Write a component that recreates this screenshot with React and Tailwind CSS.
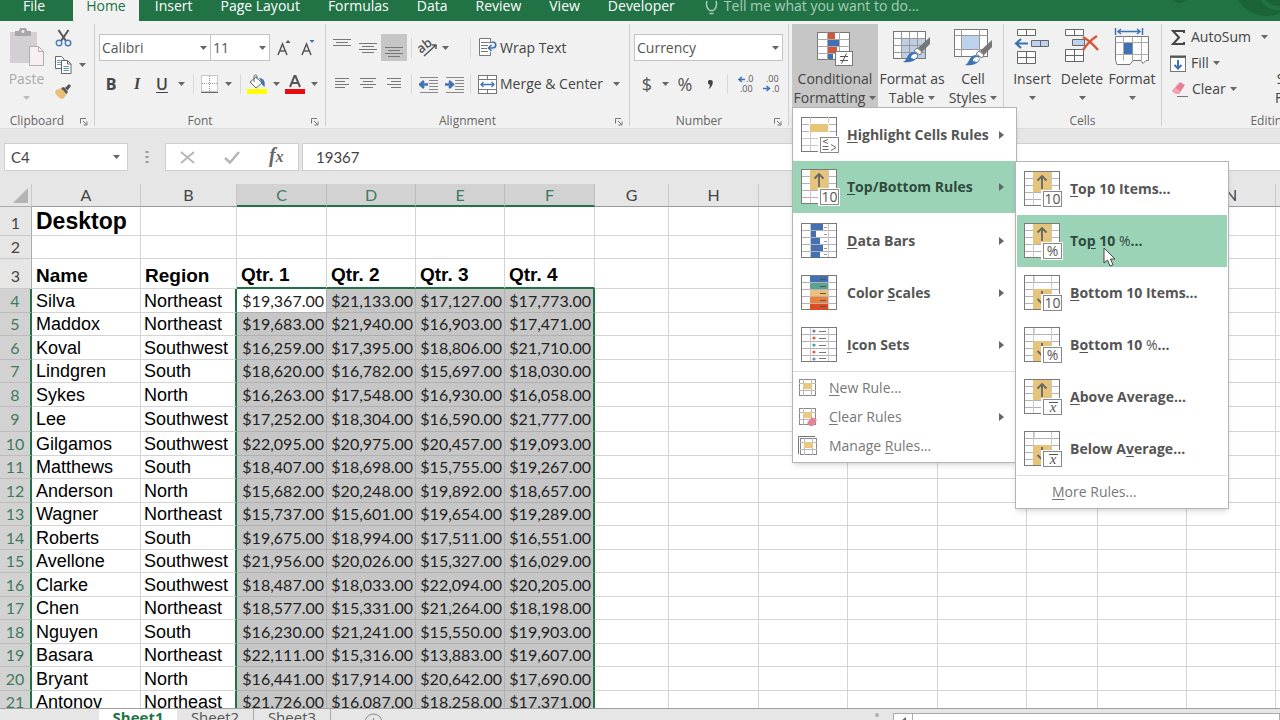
const tabs = ['Insert', 'Page Layout', 'Formulas', 'Data', 'Review', 'View', 'Developer'];

const columns = [
  { name: 'A', width: 109 },
  { name: 'B', width: 96 },
  { name: 'C', width: 90 },
  { name: 'D', width: 89 },
  { name: 'E', width: 89 },
  { name: 'F', width: 90 },
  { name: 'G', width: 74 },
  { name: 'H', width: 90 },
  { name: 'I', width: 89 },
  { name: 'J', width: 90 },
  { name: 'K', width: 89 },
  { name: 'L', width: 71 },
  { name: 'M', width: 89 },
  { name: 'N', width: 89 },
  { name: 'O', width: 89 },
];
const selectedColumns = ['C', 'D', 'E', 'F'];
const emptyColumns = ['G', 'H', 'I', 'J', 'K', 'L', 'M', 'N', 'O'];

const people = [
  ['Silva', 'Northeast', '$19,367.00', '$21,133.00', '$17,127.00', '$17,773.00'],
  ['Maddox', 'Northeast', '$19,683.00', '$21,940.00', '$16,903.00', '$17,471.00'],
  ['Koval', 'Southwest', '$16,259.00', '$17,395.00', '$18,806.00', '$21,710.00'],
  ['Lindgren', 'South', '$18,620.00', '$16,782.00', '$15,697.00', '$18,030.00'],
  ['Sykes', 'North', '$16,263.00', '$17,548.00', '$16,930.00', '$16,058.00'],
  ['Lee', 'Southwest', '$17,252.00', '$18,304.00', '$16,590.00', '$21,777.00'],
  ['Gilgamos', 'Southwest', '$22,095.00', '$20,975.00', '$20,457.00', '$19,093.00'],
  ['Matthews', 'South', '$18,407.00', '$18,698.00', '$15,755.00', '$19,267.00'],
  ['Anderson', 'North', '$15,682.00', '$20,248.00', '$19,892.00', '$18,657.00'],
  ['Wagner', 'Northeast', '$15,737.00', '$15,601.00', '$19,654.00', '$19,289.00'],
  ['Roberts', 'South', '$19,675.00', '$18,994.00', '$17,511.00', '$16,551.00'],
  ['Avellone', 'Southwest', '$21,956.00', '$20,026.00', '$15,327.00', '$16,029.00'],
  ['Clarke', 'Southwest', '$18,487.00', '$18,033.00', '$22,094.00', '$20,205.00'],
  ['Chen', 'Northeast', '$18,577.00', '$15,331.00', '$21,264.00', '$18,198.00'],
  ['Nguyen', 'South', '$16,230.00', '$21,241.00', '$15,550.00', '$19,903.00'],
  ['Basara', 'Northeast', '$22,111.00', '$15,316.00', '$13,883.00', '$19,607.00'],
  ['Bryant', 'North', '$16,441.00', '$17,914.00', '$20,642.00', '$17,690.00'],
  ['Antonov', 'Northeast', '$21,726.00', '$16,087.00', '$18,258.00', '$17,371.00'],
];

/* ---------- small shared pieces ---------- */

const Caret = ({ className = 'text-[#666]' }) => (
  <svg width="7" height="4" viewBox="0 0 7 4" className={`shrink-0 ${className}`}>
    <path d="M0 0h7L3.500 4z" fill="currentColor" />
  </svg>
);

const CaretButton = ({ label, className = 'w-[14px]' }) => (
  <button type="button" aria-label={label} className={`flex h-full items-center justify-center ${className}`}>
    <Caret />
  </button>
);

const IconButton = ({ label, className = 'w-6', children }) => (
  <button type="button" aria-label={label} className={`flex h-full items-center justify-center ${className}`}>
    {children}
  </button>
);

const Divider = ({ className = 'w-2' }) => (
  <div className={`flex h-5 justify-center ${className}`}>
    <div className="w-px bg-[#d8d8d8]" />
  </div>
);

const Group = ({ label, launcher, className = '', children }) => (
  <section className={`flex h-[102px] shrink-0 flex-col border-r border-[#d0d0d0] ${className}`}>
    <div className="h-[83px]">{children}</div>
    <div className="flex flex-1 items-end">
      <span className="flex-1 text-center text-xs leading-[10px] text-[#666]">{label}</span>
      {launcher && (
        <button type="button" aria-label={`${label} settings`} className="flex w-5 justify-center">
          <svg width="8" height="8" viewBox="0 0 8 8" fill="none" stroke="#777">
            <path d="M.5 5.500V.5H6M3 3l3.500 3.500M7 3.500V7H3.500" />
          </svg>
        </button>
      )}
    </div>
  </section>
);

const BigButton = ({ lines, caret, icon, className = '' }) => (
  <button type="button" className={`flex h-[83px] flex-col items-center pt-1 text-sm leading-[19px] text-[#444] ${className}`}>
    <span className="flex h-[41px] items-start justify-center">{icon}</span>
    <span className="whitespace-nowrap">{lines[0]}</span>
    <span className="flex h-[19px] items-center gap-1 whitespace-nowrap">
      {lines[1]}
      <Caret className={caret} />
    </span>
  </button>
);

// Underlines the access key of a menu label, percent signs stay light
const Mnemonic = ({ text, at }) => {
  const [before, after] = text.slice(at + 1).split('%');
  return (
    <span>
      {text.slice(0, at)}
      <u className="underline-offset-2">{text[at]}</u>
      {before}
      {after && <span className="font-normal">%</span>}
      {after}
    </span>
  );
};

/* ---------- ribbon icons ---------- */

const PasteIcon = () => (
  <svg width="36" height="39" viewBox="0 0 36 39">
    <rect x="1" y="4" width="27" height="31" fill="#d3d0d3" />
    <path d="M6 3h4a4 4 0 0 1 8 0h4v5H6z" fill="#a9a6a9" />
    <circle cx="14" cy="3.500" r="1.500" fill="#eee" />
    <path d="M20.500 18.500h9l5 5v14h-14z" fill="#f6f0f3" stroke="#b5adb2" />
    <path d="M29.500 18.500v5h5" fill="none" stroke="#b5adb2" />
  </svg>
);

const CutIcon = () => (
  <svg width="17" height="18" viewBox="0 0 17 18" fill="none">
    <path d="M3.500 1l7.500 11M13.500 1L6 12" stroke="#555" strokeWidth="2" />
    <circle cx="4" cy="14" r="2.800" stroke="#4a7ebb" strokeWidth="1.400" />
    <circle cx="13" cy="14" r="2.800" stroke="#4a7ebb" strokeWidth="1.400" />
  </svg>
);

const CopyIcon = () => (
  <svg width="18" height="18" viewBox="0 0 18 18" stroke="#666">
    <path d="M1.500.5h6l2.500 2.500v9.500H1.500z" fill="#fff" />
    <path d="M3 4.500h4M3 6.500h4M3 8.500h4" stroke="#7d9cc0" />
    <path d="M7.500 4.500h6l3.500 3.500v9.500H7.500z" fill="#fff" />
    <path d="M13.500 4.500V8H17" fill="none" />
    <path d="M9.500 10.500h5.500M9.500 12.500h5.500M9.500 14.500h5.500" stroke="#5b9aa8" />
  </svg>
);

const PainterIcon = () => (
  <svg width="18" height="17" viewBox="0 0 18 17">
    <path d="M2 7l6-2 5 6-4 5c-3 0-6-3-8-6z" fill="#e9bf78" />
    <path d="M7 5l3-1 4 5-1.500 2z" fill="#555" />
    <path d="M11 5l4-4 2 2-3.500 4.500z" fill="#555" />
  </svg>
);

const FontSizeIcon = ({ up }) => (
  <svg width="18" height="18" viewBox="0 0 18 18">
    <path d="M3 16L7.500 5 12 16M4.800 12h5.400" fill="none" stroke="#555" strokeWidth="1.500" />
    {up ? <path d="M10.500 4h5L13 1z" fill="#555" /> : <path d="M10.500 1h5L13 4z" fill="#3f72b3" />}
  </svg>
);

const BordersIcon = () => (
  <svg width="17" height="18" viewBox="0 0 17 18" fill="#fff" stroke="#999">
    <rect x=".5" y=".5" width="16" height="16" strokeDasharray="1 1" />
    <path d="M8.500 1v16M1 8.500h15" strokeDasharray="1 1" />
    <path d="M0 17.500h17" stroke="#666" />
  </svg>
);

const FillColorIcon = () => (
  <svg width="20" height="20" viewBox="0 0 20 20">
    <path d="M3 8l6-5 6 6-6 5z" fill="#fff" stroke="#666" />
    <path d="M7 8V2.500a1.500 1.500 0 0 1 3 0V5" fill="none" stroke="#666" />
    <path d="M12 4c5 0 6.500 4 5.500 9-1.500-1-3-3-3-5z" fill="#3f72b3" />
    <rect y="15" width="20" height="5" fill="#ffff00" />
  </svg>
);

const FontColorIcon = () => (
  <svg width="20" height="20" viewBox="0 0 20 20">
    <path d="M5 13l4.500-11h1L15 13M6.800 9h6.400" fill="none" stroke="#555" strokeWidth="2" />
    <rect y="15" width="20" height="5" fill="#e60b12" />
  </svg>
);

const LinesIcon = ({ d }) => (
  <svg width="18" height="18" viewBox="0 0 18 18" stroke="#777" fill="none">
    <path d={d} />
  </svg>
);

const OrientationIcon = () => (
  <svg width="20" height="19" viewBox="0 0 20 19" fill="none" stroke="#555">
    <text x="0" y="12" fontSize="13" fontWeight="600" fill="#555" stroke="none" transform="rotate(-38 7 10)">ab</text>
    <path d="M6 18L18 7M14 7h4v4" strokeWidth="1.500" />
  </svg>
);

const IndentIcon = ({ right }) => (
  <svg width="19" height="17" viewBox="0 0 19 17" fill="none">
    <path d="M1 1.500h18M10 4.500h9M10 7.500h9M10 10.500h9M10 13.500h9M1 16.500h18" stroke="#888" />
    {right ? (
      <path d="M0 8.500h7M4 5l4 3.500L4 12" stroke="#3f72b3" strokeWidth="2.400" />
    ) : (
      <path d="M9 8.500H2M5 5L1 8.500 5 12" stroke="#3f72b3" strokeWidth="2.400" />
    )}
  </svg>
);

const WrapIcon = () => (
  <svg width="19" height="19" viewBox="0 0 19 19" fill="none">
    <path d="M12.500 4V.5H1.500v17h11V14" fill="#fff" stroke="#777" />
    <path d="M3 4.500h11M3 7.500h7M3 10.500h6M3 13.500h7" stroke="#777" />
    <path d="M14 4c5 0 5 6 0 6h-3M13.500 7l-3 3 3 3" stroke="#3f72b3" strokeWidth="1.700" />
  </svg>
);

const MergeIcon = () => (
  <svg width="19" height="19" viewBox="0 0 19 19" fill="#fff" stroke="#777">
    <rect x=".5" y=".5" width="18" height="18" />
    <path d="M.5 4.500h18M.5 14.500h18M9.500 0v4.500M9.500 14.500V19" />
    <path d="M3 9.500h13M5.500 7L3 9.500 5.500 12M13.500 7l2.500 2.500-2.500 2.500" fill="none" stroke="#3f72b3" strokeWidth="1.300" />
  </svg>
);

const DecimalIcon = ({ less }) => (
  <svg width="17" height="18" viewBox="0 0 17 18" fill="#555" fontSize="9">
    {less ? (
      <>
        <text x="3" y="7">.00</text>
        <text x="9" y="17">.0</text>
        <path d="M0 13.500h6M3.500 11l3 2.500-3 2.500" fill="none" stroke="#3f72b3" strokeWidth="1.500" />
      </>
    ) : (
      <>
        <text x="8" y="7">.0</text>
        <text x="2" y="17">.00</text>
        <path d="M7 4.500H1M4 2L1 4.500 4 7" fill="none" stroke="#3f72b3" strokeWidth="1.500" />
      </>
    )}
  </svg>
);

const ConditionalIcon = () => (
  <svg width="38" height="38" viewBox="0 0 38 38">
    <rect x="1.500" y="4.500" width="32" height="27" fill="#fff" stroke="#777" />
    <path d="M1.500 11.500h32M1.500 18.500h32M1.500 25.500h32M11.500 4v28M23.500 4v28" stroke="#aaa" />
    <rect x="12" y="5" width="7" height="6" fill="#d2573a" />
    <rect x="12" y="12" width="11" height="6" fill="#3f72b3" />
    <rect x="12" y="19" width="9" height="6" fill="#d2573a" />
    <rect x="12" y="26" width="5" height="5" fill="#3f72b3" />
    <rect x="19.500" y="23.500" width="17" height="14" fill="#fff" stroke="#777" />
    <path d="M24 28.500h8M24 32.500h8M30.500 25.500l-5 10" stroke="#555" fill="none" />
  </svg>
);

const BrushPaths = () => (
  <>
    <path d="M37 9v7l-8 8-4-4z" fill="#777" />
    <path d="M24 20l5 4-2 3-6-4z" fill="#fff" stroke="#777" />
    <path d="M10 34c4-1 4-9 10-10 3 0 6 3 4 6-3 4-9 5-14 4z" fill="#3f72b3" />
    <path d="M18 30c0-3 2-4 4-4s3 2 1 4-3 0-5 0z" fill="#fff" />
  </>
);

const FormatTableIcon = () => (
  <svg width="38" height="36" viewBox="0 0 38 36">
    <rect x=".5" y="3.500" width="32" height="27" fill="#fff" stroke="#777" />
    <rect x="9" y="10" width="23" height="20" fill="#bccde4" />
    <path d="M.5 10.500h32M.5 17.500h32M.5 24.500h32M8.500 4v27M16.500 4v27M24.500 4v27" stroke="#999" />
    <BrushPaths />
  </svg>
);

const CellStylesIcon = () => (
  <svg width="38" height="38" viewBox="0 0 38 38">
    <rect x=".5" y="1.500" width="33" height="27" fill="#fff" stroke="#777" />
    <path d="M.5 7.500h33M.5 21.500h33M7.500 1v27M25.500 1v27" stroke="#999" />
    <rect x="8" y="8" width="17" height="13" fill="#bdd2ec" />
    <g transform="translate(1 3)">
      <BrushPaths />
    </g>
  </svg>
);

const InsertCellsIcon = () => (
  <svg width="36" height="37" viewBox="0 0 36 37" fill="#fff" stroke="#666">
    <path d="M3.500 1.500h18v6h-18zM12.500 1.500v6M3.500 23.500h18v12h-18zM12.500 23.500v12M3.500 29.500h18" />
    <path d="M17.500 12.500h17v6h-17z" fill="#bdd2ec" />
    <path d="M26.500 12.500v6" />
    <path d="M14 15.500H2M7 11l-5 4.500L7 20" fill="none" stroke="#3f72b3" strokeWidth="2.200" />
  </svg>
);

const DeleteCellsIcon = () => (
  <svg width="36" height="37" viewBox="0 0 36 37" fill="#fff" stroke="#666">
    <path d="M1.500 1.500h18v6h-18zM10.500 1.500v6M1.500 21.500h18v12h-18zM10.500 21.500v12M1.500 27.500h18" />
    <path d="M8.500 11.500h12v6h-12z" fill="#bdd2ec" />
    <path d="M19 9c5 3 10 7 15 13M33 8c-5 3-10 8-14 14" fill="none" stroke="#d9553a" strokeWidth="2.400" />
  </svg>
);

const FormatCellsIcon = () => (
  <svg width="36" height="38" viewBox="0 0 36 38" fill="none" stroke="#777">
    <path d="M1.500 0v7M28.500 0v7M4 3.500h22M7 1L4 3.500 7 6M23 1l3 2.500L23 6" stroke="#3f72b3" strokeWidth="1.500" />
    <path d="M1.500 8.500h33v24H32l-3 3-2-3h-8l-3 4H3l-1.500-4z" fill="#fff" />
    <path d="M1.500 14.500h33M1.500 26.500h33M9.500 8.500v24M18.500 8.500v24M27.500 8.500v24" stroke="#aaa" />
    <path d="M10 15h8.500v11H10z" fill="#3f72b3" stroke="none" />
  </svg>
);

const SigmaIcon = () => (
  <svg width="17" height="17" viewBox="0 0 17 17" fill="none" stroke="#444" strokeWidth="2">
    <path d="M14 4V2H3l6 6.500L3 15h11v-2" />
  </svg>
);

const FillDownIcon = () => (
  <svg width="17" height="17" viewBox="0 0 17 17" fill="none">
    <rect x=".5" y="2.500" width="15" height="14" fill="#fff" stroke="#777" />
    <path d="M0 1.500h16" stroke="#555" strokeWidth="2" />
    <path d="M8 5v8M4.500 10L8 13.500 11.500 10" stroke="#3f72b3" strokeWidth="2" />
  </svg>
);

const EraserIcon = () => (
  <svg width="18" height="17" viewBox="0 0 18 17">
    <path d="M10 1l5 3-6 9H6l-4-3z" fill="#e88198" />
    <path d="M5 6.500l5.500 4L9 13H6l-4-3z" fill="#f2a3b5" />
    <path d="M7 15.500h11" stroke="#777" />
  </svg>
);

/* ---------- menu icons ---------- */

const SheetIcon = ({ children }) => (
  <svg width="39" height="37" viewBox="0 0 39 37" fontWeight="400" className="shrink-0">
    <rect x=".5" y=".5" width="35" height="34" fill="#fff" />
    <path d="M0 7.500h36M0 14.500h36M0 21.500h36M0 28.500h36" stroke="#b5b0b8" />
    <path d="M9.500 0v35M27.500 0v35" stroke="#c9c9c9" />
    <rect x=".5" y=".5" width="35" height="34" fill="none" stroke="#7a7a7a" />
    {children}
  </svg>
);

const Badge = ({ text }) => (
  <>
    <rect x="17" y="19" width="22" height="18" fill="#fff" />
    <rect x="19.500" y="20.500" width="18" height="15" fill="#fff" stroke="#888" />
    {text === 'x' ? (
      <>
        <path d="M25 23.500h9" stroke="#555" />
        <text x="29" y="33" fontSize="15" fontStyle="italic" textAnchor="middle" fill="#555" className="[font-family:'Liberation_Serif',serif]">x</text>
      </>
    ) : (
      <text x="28.500" y="33" fontSize="14" textAnchor="middle" fill="#555">{text}</text>
    )}
  </>
);

const TopIcon = ({ badge }) => (
  <SheetIcon>
    <rect x="9" y="1" width="18" height="20" fill="#e7c47c" />
    <path d="M18 18V5M13.500 9.500L18 5l4.500 4.500" fill="none" stroke="#666" strokeWidth="1.800" />
    <Badge text={badge} />
  </SheetIcon>
);

const BottomIcon = ({ badge }) => (
  <SheetIcon>
    <path d="M10 7.500h17M10 1v6" stroke="#b5b0b8" />
    <rect x="9" y="14" width="18" height="20" fill="#e7c47c" />
    <path d="M18 16v12M13.500 24l4.500 4.500" fill="none" stroke="#666" strokeWidth="1.800" />
    <Badge text={badge} />
  </SheetIcon>
);

const HighlightIcon = () => (
  <SheetIcon>
    <rect x="8" y="1" width="20" height="33" fill="#fff" />
    <path d="M9.500 0v6M27.500 0v6M9.500 15v19" stroke="#c9c9c9" />
    <rect x="9" y="7" width="18" height="8" fill="#e7c47c" />
    <path d="M1 21.500h27M1 28.500h20" stroke="#c9c9c9" />
    <rect x="17" y="19" width="22" height="18" fill="#fff" />
    <rect x="19.500" y="20.500" width="18" height="15" fill="#fff" stroke="#888" />
    <path d="M27 22.500l-5 2 5 2M21.500 29.500h6M21.500 32.500h6M30 27.500l5 3-5 3" fill="none" stroke="#666" />
  </SheetIcon>
);

const DataBarsIcon = () => (
  <SheetIcon>
    {[12, 5, 9, 12, 9].map((w, i) => (
      <rect key={i} x="10" y={i * 7 + 1} width={w} height="6" fill="#4472b0" />
    ))}
    <path d="M23 4.500h3M23 11.500h3M23 18.500h3M23 25.500h3M23 31.500h3" stroke="#999" />
  </SheetIcon>
);

const ColorScalesIcon = () => (
  <SheetIcon>
    {['#4472b0', '#5aa393', '#ecc07c', '#ea7f35', '#dd4b25'].map((color, i) => (
      <rect key={color} x="9" y={i * 7 + 1} width="18" height="6" fill={color} />
    ))}
    <path d="M19 4.500h6M19 11.500h6M19 18.500h6M19 25.500h6M19 31.500h6" stroke="#555" />
  </SheetIcon>
);

const IconSetsIcon = () => (
  <SheetIcon>
    {['#7a7a9a', '#d9653a', '#4a9aa8', '#d9653a', '#6f8f9a'].map((color, i) => (
      <circle key={i} cx="13" cy={i * 7 + 4} r="1.600" fill={color} />
    ))}
    <path d="M18 4.500h7M18 11.500h7M18 18.500h7M18 25.500h7M18 31.500h7" stroke="#777" />
  </SheetIcon>
);

const RuleIcon = ({ kind }) => (
  <svg width="20" height="20" viewBox="0 0 20 20" fill="none" className="shrink-0">
    {kind === 'manage' && <path d="M.5 18V.5H17" stroke="#777" />}
    <g transform={kind === 'manage' ? 'translate(2 2)' : 'translate(1 1)'}>
      <rect x=".5" y=".5" width="16" height="16" fill="#fff" stroke="#888" />
      <path d="M4.500 0v17M12.500 0v17M0 4.500h17M0 11.500h17" stroke="#bbb" />
      <rect x="4" y="4" width="9" height="6" fill="#e9c883" />
    </g>
    {kind === 'clear' && <path d="M14 10l5 3-4 6h-3l-3-3z" fill="#e88198" />}
  </svg>
);

const rules = [
  { text: 'Highlight Cells Rules', at: 0, icon: <HighlightIcon /> },
  { text: 'Top/Bottom Rules', at: 0, icon: <TopIcon badge="10" />, open: true },
  { text: 'Data Bars', at: 0, icon: <DataBarsIcon /> },
  { text: 'Color Scales', at: 6, icon: <ColorScalesIcon /> },
  { text: 'Icon Sets', at: 0, icon: <IconSetsIcon /> },
];

const ruleCommands = [
  { text: 'New Rule...', at: 0, kind: 'new' },
  { text: 'Clear Rules', at: 0, kind: 'clear', more: true },
  { text: 'Manage Rules...', at: 7, kind: 'manage' },
];

const topBottomRules = [
  { text: 'Top 10 Items...', at: 0, icon: <TopIcon badge="10" /> },
  { text: 'Top 10 %...', at: 2, icon: <TopIcon badge="%" />, hovered: true },
  { text: 'Bottom 10 Items...', at: 0, icon: <BottomIcon badge="10" /> },
  { text: 'Bottom 10 %...', at: 1, icon: <BottomIcon badge="%" /> },
  { text: 'Above Average...', at: 0, icon: <TopIcon badge="x" /> },
  { text: 'Below Average...', at: 7, icon: <BottomIcon badge="x" /> },
];

const MoreArrow = () => (
  <svg width="5" height="8" viewBox="0 0 5 8" className="mr-3 ml-auto shrink-0">
    <path d="M0 0l5 4-5 4z" fill="#666" />
  </svg>
);

const Pointer = () => (
  <svg width="13" height="20" viewBox="0 0 13 20" className="absolute top-8 left-[86px]">
    <path d="M1 1v15l3.500-3 2.500 6 3-1.200-2.500-5.800H12z" fill="#fff" stroke="#444" />
  </svg>
);

const TopBottomMenu = () => (
  <ul className="absolute top-0 left-full z-20 -ml-px w-[214px] border border-[#b5b5b5] bg-white p-px text-[#555] shadow-md">
    {topBottomRules.map((rule) => (
      <li key={rule.text} className="relative">
        <button
          type="button"
          className={`flex h-[52px] w-full items-center gap-[7px] pl-[7px] text-sm font-bold whitespace-nowrap ${
            rule.hovered ? 'bg-[#9bd3b7] text-[#2f4a3d]' : ''
          }`}
        >
          {rule.icon}
          <Mnemonic text={rule.text} at={rule.at} />
        </button>
        {rule.hovered && <Pointer />}
      </li>
    ))}
    <li className="border-t border-[#dcdcdc]">
      <button type="button" className="flex h-[31px] w-full items-center pl-[35px] text-sm text-[#777]">
        <Mnemonic text="More Rules..." at={0} />
      </button>
    </li>
  </ul>
);

const ConditionalMenu = () => (
  <div className="absolute top-full left-0 z-10 w-[225px] border border-[#b5b5b5] bg-white pt-px text-[#555] shadow-md">
    <ul>
      {rules.map((rule) => (
        <li key={rule.text} className={`relative ${rule.open ? 'mb-0.5' : ''}`}>
          <button
            type="button"
            className={`flex h-[52px] w-full items-center gap-[7px] pl-2 text-sm font-bold whitespace-nowrap ${
              rule.open ? 'bg-[#9bd3b7] text-[#2f4a3d]' : ''
            }`}
          >
            {rule.icon}
            <Mnemonic text={rule.text} at={rule.at} />
            <MoreArrow />
          </button>
          {rule.open && <TopBottomMenu />}
        </li>
      ))}
    </ul>
    <ul className="border-t border-[#dcdcdc] pt-px pb-0.5">
      {ruleCommands.map((rule) => (
        <li key={rule.text}>
          <button type="button" className="flex h-[29px] w-full items-center gap-[11px] pl-[5px] text-sm text-[#777]">
            <RuleIcon kind={rule.kind} />
            <Mnemonic text={rule.text} at={rule.at} />
            {rule.more && <MoreArrow />}
          </button>
        </li>
      ))}
    </ul>
  </div>
);

/* ---------- page parts ---------- */

const RibbonTabs = () => (
  <header className="relative flex h-[21px] shrink-0 overflow-hidden bg-[#217346] text-sm leading-3 whitespace-nowrap text-white">
    <svg width="120" height="21" viewBox="0 0 120 21" className="absolute top-0 right-0">
      <circle cx="19" cy="-6" r="9" fill="#1b6339" />
      <circle cx="106" cy="-16" r="32" fill="#1b6339" />
      <circle cx="118" cy="-10" r="18" fill="none" stroke="#217346" strokeWidth="4" />
    </svg>
    <button type="button" className="flex items-start pr-7 pl-[23px]">File</button>
    <button type="button" className="flex items-start bg-[#f1f1f1] px-[13px] text-[#217346]">Home</button>
    <nav className="flex gap-7 pl-4">
      {tabs.map((tab) => (
        <button type="button" key={tab} className="flex items-start">
          {tab}
        </button>
      ))}
    </nav>
    <button type="button" className="flex items-start gap-1.5 pl-[30px] text-[#a8cdb8]">
      <svg width="13" height="15" viewBox="0 0 13 15" fill="none" stroke="currentColor" strokeWidth="1.500">
        <path d="M4 10C1 7 1 4 2 1M9 10c3-3 3-6 2-9M4 10.500h5M4.500 13.500h4" />
      </svg>
      Tell me what you want to do...
    </button>
  </header>
);

const Select = ({ label, value, className }) => (
  <div className={`relative ${className}`}>
    <select
      aria-label={label}
      defaultValue={value}
      className="block h-[27px] w-full appearance-none border border-[#c3c3c3] bg-white px-0.5 text-sm text-[#555]"
    >
      <option>{value}</option>
    </select>
    <span className="pointer-events-none absolute top-3 right-1">
      <Caret />
    </span>
  </div>
);

const Ribbon = () => (
  <div className="flex h-[108px] shrink-0 border-b border-[#dcdcdc] bg-[#f1f1f1] pt-[3px]">
    <Group label="Clipboard" launcher className="w-[95px]">
      <div className="flex">
        <button type="button" className="flex w-[53px] flex-col items-center pt-1 text-sm leading-[19px] text-[#aaa]">
          <span className="h-[41px]">
            <PasteIcon />
          </span>
          Paste
          <span className="flex h-[19px] items-center">
            <Caret className="text-[#bbb]" />
          </span>
        </button>
        <div>
          <div className="flex h-[27px]">
            <IconButton label="Cut" className="w-5"><CutIcon /></IconButton>
          </div>
          <div className="flex h-[27px]">
            <IconButton label="Copy" className="w-5"><CopyIcon /></IconButton>
            <CaretButton label="Copy options" className="w-[18px]" />
          </div>
          <div className="flex h-[27px]">
            <IconButton label="Format Painter" className="w-5"><PainterIcon /></IconButton>
          </div>
        </div>
      </div>
    </Group>

    <Group label="Font" launcher className="w-[231px]">
      <div className="flex flex-col gap-2.5 pt-2.5 pl-1">
        <div className="flex h-[27px] items-center">
          <Select label="Font" value="Calibri" className="w-28" />
          <Select label="Font size" value="11" className="-ml-px w-[60px]" />
          <IconButton label="Increase Font Size" className="ml-0.5 w-6"><FontSizeIcon up /></IconButton>
          <IconButton label="Decrease Font Size"><FontSizeIcon /></IconButton>
        </div>
        <div className="flex h-[26px] items-center text-base text-[#444]">
          <IconButton label="Bold"><b>B</b></IconButton>
          <IconButton label="Italic" className="w-7">
            <i className="[font-family:'Liberation_Serif',serif] font-bold">I</i>
          </IconButton>
          <IconButton label="Underline" className="w-[22px]">
            <u className="font-semibold underline-offset-2">U</u>
          </IconButton>
          <CaretButton label="Underline options" className="w-4" />
          <Divider />
          <IconButton label="Borders"><BordersIcon /></IconButton>
          <CaretButton label="Border options" />
          <Divider className="w-2.5" />
          <IconButton label="Fill Color"><FillColorIcon /></IconButton>
          <CaretButton label="Fill color options" />
          <IconButton label="Font Color"><FontColorIcon /></IconButton>
          <CaretButton label="Font color options" />
        </div>
      </div>
    </Group>

    <Group label="Alignment" launcher className="w-[304px]">
      <div className="flex flex-col gap-2.5 pt-2.5 pl-[3px] text-sm text-[#444]">
        <div className="flex h-[27px] items-center">
          <IconButton label="Top Align" className="w-[26px]"><LinesIcon d="M0 .5h18M3 3.500h12M0 6.500h18" /></IconButton>
          <IconButton label="Middle Align" className="w-[26px]"><LinesIcon d="M0 4.500h18M3 7.500h12M0 10.500h18M3 13.500h12" /></IconButton>
          <IconButton label="Bottom Align" className="w-[26px] bg-[#c6c6c6]"><LinesIcon d="M0 8.500h18M3 11.500h12M0 14.500h18M3 17.500h12" /></IconButton>
          <Divider />
          <IconButton label="Orientation" className="w-[26px]"><OrientationIcon /></IconButton>
          <CaretButton label="Orientation options" className="mr-[18px] w-2" />
          <Divider className="w-1.5" />
          <button type="button" className="flex items-center gap-[3px] pl-[5px] whitespace-nowrap">
            <WrapIcon />
            Wrap Text
          </button>
        </div>
        <div className="flex h-[26px] items-center">
          <IconButton label="Align Left" className="w-[26px]"><LinesIcon d="M2 3.500h14M2 6.500h10M2 9.500h14M2 12.500h10" /></IconButton>
          <IconButton label="Center" className="w-[26px]"><LinesIcon d="M1 3.500h16M4 6.500h10M1 9.500h16M4 12.500h10" /></IconButton>
          <IconButton label="Align Right" className="w-[26px]"><LinesIcon d="M2 3.500h14M6 6.500h10M2 9.500h14M6 12.500h10" /></IconButton>
          <Divider />
          <IconButton label="Decrease Indent" className="w-[26px]"><IndentIcon /></IconButton>
          <IconButton label="Increase Indent" className="w-[26px]"><IndentIcon right /></IconButton>
          <Divider className="w-1.5" />
          <button type="button" className="flex items-center gap-[3px] pl-[5px] whitespace-nowrap">
            <MergeIcon />
            Merge &amp; Center
          </button>
          <CaretButton label="Merge options" className="ml-1.5 w-4" />
        </div>
      </div>
    </Group>

    <Group label="Number" launcher className="w-[159px]">
      <div className="flex flex-col gap-2.5 pt-2.5 pl-1">
        <Select label="Number format" value="Currency" className="w-[149px]" />
        <div className="flex h-[26px] items-center text-lg text-[#555]">
          <IconButton label="Accounting Number Format" className="w-[26px]">$</IconButton>
          <CaretButton label="Accounting options" className="w-2.5" />
          <IconButton label="Percent Style" className="w-[30px]">%</IconButton>
          <IconButton label="Comma Style" className="w-5">
            <svg width="5" height="9" viewBox="0 0 5 9">
              <path d="M2.500 0a2.300 2.300 0 0 1 2.300 2.500C4.800 5 3 8 .5 9c1-1.500 1.500-3 1.400-4.300A2.300 2.300 0 0 1 2.500 0z" fill="#444" />
            </svg>
          </IconButton>
          <Divider className="w-3.5" />
          <IconButton label="Increase Decimal" className="w-[25px]"><DecimalIcon /></IconButton>
          <IconButton label="Decrease Decimal" className="w-[25px]"><DecimalIcon less /></IconButton>
        </div>
      </div>
    </Group>

    <Group label="Styles" className="w-[215px] pl-[3px]">
      <div className="flex">
        <div className="relative">
          <BigButton lines={['Conditional', 'Formatting']} icon={<ConditionalIcon />} className="w-[86px] bg-[#c6c6c6]" />
          <ConditionalMenu />
        </div>
        <BigButton lines={['Format as', 'Table']} icon={<FormatTableIcon />} className="w-[68px]" />
        <BigButton lines={['Cell', 'Styles']} icon={<CellStylesIcon />} className="w-[54px]" />
      </div>
    </Group>

    <Group label="Cells" className="w-[158px]">
      <div className="flex pl-[3px]">
        <BigButton lines={['Insert']} icon={<InsertCellsIcon />} className="w-[50px]" />
        <BigButton lines={['Delete']} icon={<DeleteCellsIcon />} className="w-[50px]" />
        <BigButton lines={['Format']} icon={<FormatCellsIcon />} className="w-[50px]" />
      </div>
    </Group>

    <Group label="Editing" className="w-[216px]">
      <div className="flex pl-2 text-sm text-[#444]">
        <div className="w-[105px] shrink-0">
          <button type="button" className="flex h-[26px] items-center gap-1">
            <SigmaIcon />
            AutoSum
            <span className="pl-1.5"><Caret /></span>
          </button>
          <button type="button" className="flex h-[26px] items-center gap-1">
            <FillDownIcon />
            Fill
            <Caret />
          </button>
          <button type="button" className="flex h-[26px] items-center gap-1">
            <EraserIcon />
            Clear
            <Caret />
          </button>
        </div>
        <BigButton lines={['Sort &', 'Filter']} className="w-11" />
      </div>
    </Group>
  </div>
);

const FormulaBar = () => (
  <div className="flex h-[55px] shrink-0 items-start bg-[#e6e6e6] pt-3.5 pl-1 text-[15px] text-[#444] [font-family:Lato,sans-serif]">
    <div className="relative w-[124px]">
      <input aria-label="Name Box" defaultValue="C4" className="block h-7 w-full border border-[#cfcfcf] bg-white px-1.5" />
      <span className="pointer-events-none absolute top-3 right-2">
        <Caret />
      </span>
    </div>
    <svg width="37" height="28" viewBox="0 0 37 28" fill="#999">
      <path d="M17.500 8h3v2h-3zM17.500 13h3v2h-3zM17.500 18h3v2h-3z" />
    </svg>
    <div className="flex h-7 w-[134px] items-center justify-around border border-[#cfcfcf] bg-white">
      <button type="button" aria-label="Cancel">
        <svg width="15" height="13" viewBox="0 0 15 13" stroke="#b5b5b5" strokeWidth="1.800">
          <path d="M1 1l13 11M14 1L1 12" />
        </svg>
      </button>
      <button type="button" aria-label="Enter">
        <svg width="16" height="13" viewBox="0 0 16 13" fill="none" stroke="#b5b5b5" strokeWidth="2.500">
          <path d="M1 7l5 4.500L15 1" />
        </svg>
      </button>
      <button type="button" aria-label="Insert Function" className="text-xl leading-5 font-bold text-[#666] italic [font-family:'Liberation_Serif',serif]">
        f<span className="text-base">x</span>
      </button>
    </div>
    <input aria-label="Formula Bar" defaultValue="19367" className="ml-[3px] block h-7 min-w-0 flex-1 border border-r-0 border-[#cfcfcf] bg-white px-[13px]" />
  </div>
);

const RowNumber = ({ number, selected, className = '' }) => (
  <th
    scope="row"
    className={`border-b p-0 text-center text-base leading-5 font-normal [font-family:Lato,sans-serif] ${
      selected
        ? 'border-r-2 border-r-[#217346] border-b-[#bcbcbc] bg-[#d2d2d2] text-[#3f7a5e]'
        : 'border-r border-r-[#ababab] border-b-[#c9c9c9] bg-[#e6e6e6] text-[#444]'
    } ${className}`}
  >
    {number}
  </th>
);

const cell = 'border-r border-b border-[#d4d4d4] p-0 ';

const EmptyCells = ({ names }) => names.map((name) => <td key={name} className={cell} />);

// Rows alternate between two heights, row 9 is a touch taller
const rowHeight = (number) => {
  if (number === 9) return 'h-[25px]';
  return number % 2 === 0 ? 'h-6' : 'h-[23px]';
};

const Sheet = () => (
  <main className="min-h-0 flex-1 overflow-hidden bg-white">
    <table className="w-full table-fixed border-separate border-spacing-0 text-lg leading-5 whitespace-nowrap text-black [font-family:'Liberation_Sans',sans-serif]">
      <colgroup>
        <col className="w-8" />
        {columns.map((column) => (
          <col key={column.name} style={{ width: column.width }} />
        ))}
      </colgroup>
      <thead>
        <tr className="h-[23px] text-base leading-5 [font-family:Lato,sans-serif]">
          <td className="border-r border-b border-r-[#c9c9c9] border-b-[#ababab] bg-[#e6e6e6] p-0 align-bottom">
            <svg width="15" height="15" viewBox="0 0 15 15" className="mr-[3px] mb-[3px] ml-auto">
              <path d="M15 0v15H0z" fill="#b4b4b4" />
            </svg>
          </td>
          {columns.map(({ name }) => (
            <th
              key={name}
              scope="col"
              className={`border-r p-0 font-normal ${
                selectedColumns.includes(name)
                  ? 'border-b-2 border-r-[#bcbcbc] border-b-[#217346] bg-[#d2d2d2] text-[#3f7a5e]'
                  : 'border-b border-r-[#c9c9c9] border-b-[#999] bg-[#e6e6e6] text-[#444]'
              }`}
            >
              {name}
            </th>
          ))}
        </tr>
      </thead>
      <tbody>
        <tr className="h-[29px]">
          <RowNumber number={1} className="pb-0.5 align-bottom" />
          <td className={`${cell} pl-1 text-[23px] leading-6 font-bold`}>Desktop</td>
          <EmptyCells names={['B', ...selectedColumns, ...emptyColumns]} />
        </tr>
        <tr className="h-[23px]">
          <RowNumber number={2} />
          <EmptyCells names={['A', 'B', ...selectedColumns, ...emptyColumns]} />
        </tr>
        <tr className="h-[30px] text-[19px] font-bold">
          <RowNumber number={3} className="pb-0.5 align-bottom" />
          <td className={`${cell} pb-0.5 pl-1 align-bottom`}>Name</td>
          <td className={`${cell} pb-0.5 pl-1 align-bottom`}>Region</td>
          {['Qtr. 1', 'Qtr. 2', 'Qtr. 3', 'Qtr. 4'].map((quarter) => (
            <td key={quarter} className="border-r border-b-2 border-r-[#d4d4d4] border-b-[#217346] p-0 pb-0.5 pl-1 align-bottom">
              {quarter}
            </td>
          ))}
          <EmptyCells names={emptyColumns} />
        </tr>
        {people.map(([name, region, ...amounts], index) => {
          const number = index + 4;
          return (
            <tr key={name} className={rowHeight(number)}>
              <RowNumber number={number} selected />
              <td className={`${cell} pl-1`}>{name}</td>
              <td className="border-r-2 border-b border-r-[#217346] border-b-[#d4d4d4] p-0 pl-[3px]">{region}</td>
              {amounts.map((amount, i) => (
                <td
                  key={selectedColumns[i]}
                  className={`border-b border-b-[#b0b0b0] p-0 pr-0.5 text-right text-base leading-5 text-[#222] [font-family:Lato,sans-serif] ${
                    i === 3 ? 'border-r-2 border-r-[#217346]' : 'border-r border-r-[#b0b0b0]'
                  } ${number === 4 && i === 0 ? 'bg-white' : 'bg-[#c6c6c6]'}`}
                >
                  {amount}
                </td>
              ))}
              <EmptyCells names={emptyColumns} />
            </tr>
          );
        })}
      </tbody>
    </table>
  </main>
);

const SheetTabs = () => (
  <footer className="flex h-3 shrink-0 items-start overflow-hidden border-t border-[#9f9f9f] bg-[#e6e6e6] pl-[99px] text-[15px] leading-4 text-[#555]">
    <button type="button" className="w-[78px] bg-white font-bold text-[#217346]">Sheet1</button>
    <button type="button" className="w-[77px] border-r border-[#ababab]">Sheet2</button>
    <button type="button" className="w-[77px] border-r border-[#ababab]">Sheet3</button>
    <button type="button" aria-label="New sheet" className="pt-1 pl-[33px]">
      <svg width="19" height="19" viewBox="0 0 19 19" fill="none" stroke="#888">
        <path d="M9.500 5v9M5 9.500h9" />
        <circle cx="9.500" cy="9.500" r="8.500" />
      </svg>
    </button>
    <div className="ml-auto flex w-[405px] gap-3.5 pt-1">
      <span className="h-1 w-1 rounded-full bg-[#b0b0b0]" />
      <div className="flex h-4 flex-1 border border-[#ababab] bg-white">
        <button type="button" aria-label="Scroll left" className="flex w-[19px] items-center justify-center border-r border-[#ababab]">
          <svg width="5" height="8" viewBox="0 0 5 8">
            <path d="M5 0v8L0 4z" fill="#666" />
          </svg>
        </button>
      </div>
    </div>
  </footer>
);

const App = () => {
  return (
    <div className="flex h-screen flex-col overflow-hidden bg-white [font-family:'Open_Sans',sans-serif]">
      <RibbonTabs />
      <Ribbon />
      <FormulaBar />
      <Sheet />
      <SheetTabs />
    </div>
  );
};

export default App;
